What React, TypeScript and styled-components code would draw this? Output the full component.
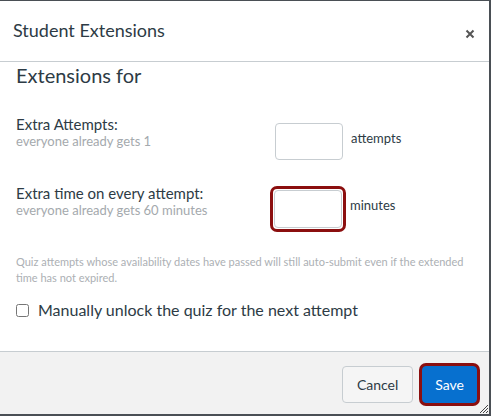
import React, { useState } from "react";
import styled, { createGlobalStyle } from "styled-components";

const GlobalStyle = createGlobalStyle`
  html, body {
    margin: 0;
    padding: 0;
    background: #ffffff;
  }
  body {
    font-family: Lato, "Liberation Sans", sans-serif;
    color: #2d3b45;
  }
`;

const Dialog = styled.div`
  width: 491px;
  height: 416px;
  box-sizing: border-box;
  border-top: 1px solid #4a4f55;
  border-right: 2px solid #4a4f55;
  border-bottom: 2px solid #4a4f55;
  display: flex;
  flex-direction: column;
  background: #fff;
  position: relative;
`;

const Header = styled.div`
  height: 60px;
  flex: none;
  display: flex;
  align-items: center;
  justify-content: space-between;
  padding: 0 14px 0 13px;
  border-bottom: 1px solid #c7cdd1;
`;

const Title = styled.h1`
  margin: 0 0 2px;
  font-size: 18px;
  font-weight: 400;
  color: #2d3b45;
`;

const Close = styled.button`
  border: none;
  background: none;
  padding: 0;
  margin-top: 5px;
  display: flex;
  cursor: pointer;
`;

const Body = styled.div`
  flex: 1;
  padding: 0 16px;
`;

const Heading = styled.h2`
  margin: 0;
  font-size: 20px;
  font-weight: 400;
  line-height: 26px;
  color: #2d3b45;
`;

const FieldRow = styled.div<{ $top: number }>`
  display: flex;
  align-items: flex-start;
  margin-top: ${(p) => p.$top}px;
`;

const LabelCol = styled.div`
  width: 259px;
  flex: none;
`;

const Label = styled.div`
  font-size: 15px;
  line-height: 18px;
`;

const Hint = styled.div`
  font-size: 13px;
  line-height: 16px;
  color: #a4a9ad;
`;

const InputWrap = styled.div<{ $focused?: boolean; $top: number }>`
  margin-top: ${(p) => p.$top}px;
  ${(p) =>
    p.$focused &&
    `
    margin-left: -5px;
    padding: 1px;
    border: 3px solid #8b0f0f;
    border-radius: 7px;
  `}
`;

const NumInput = styled.input<{ $h: number }>`
  display: block;
  width: 68px;
  height: ${(p) => p.$h}px;
  box-sizing: border-box;
  border: 1px solid #c7cdd1;
  border-radius: 4px;
  outline: none;
  font-family: inherit;
  font-size: 14px;
  padding: 0 6px;
`;

const Unit = styled.span<{ $top: number; $left: number }>`
  font-size: 13px;
  line-height: 16px;
  margin-left: ${(p) => p.$left}px;
  margin-top: ${(p) => p.$top}px;
  color: #2d3b45;
`;

const Note = styled.p`
  margin: 22px 0 0;
  font-size: 11px;
  line-height: 16px;
  color: #acb0b4;
`;

const CheckRow = styled.label`
  display: flex;
  align-items: center;
  margin-top: 14px;
  font-size: 16px;
  line-height: 20px;
  cursor: pointer;
`;

const Check = styled.input`
  width: 13px;
  height: 13px;
  margin: 0 9px 0 0;
`;

const Footer = styled.div`
  height: 63px;
  flex: none;
  box-sizing: border-box;
  background: #f2f2f2;
  border-top: 1px solid #c7cdd1;
  display: flex;
  align-items: center;
  justify-content: flex-end;
  gap: 9px;
  padding: 2px 12px 0 0;
`;

const Button = styled.button<{ $primary?: boolean }>`
  height: 37px;
  box-sizing: border-box;
  padding: 0 ${(p) => (p.$primary ? 12 : 14)}px;
  border-radius: 4px;
  font-family: inherit;
  font-size: 14px;
  cursor: pointer;
  color: ${(p) => (p.$primary ? "#fff" : "#2d3b45")};
  background: ${(p) => (p.$primary ? "#0770cf" : "#f5f5f5")};
  border: 1px solid ${(p) => (p.$primary ? "#0770cf" : "#c7cdd1")};
  box-shadow: ${(p) => (p.$primary ? "0 0 0 3px #8b0f0f" : "none")};
`;

const Grip = styled.svg`
  position: absolute;
  right: 1px;
  bottom: 1px;
`;

export default function App() {
  const [attempts, setAttempts] = useState("");
  const [minutes, setMinutes] = useState("");
  const [unlock, setUnlock] = useState(false);

  return (
    <>
      <GlobalStyle />
      <Dialog>
        <Header>
          <Title>Student Extensions</Title>
          <Close aria-label="Close">
            <svg width="10" height="10" viewBox="0 0 10 10">
              <path d="M1.5 1.5 L8.5 8.5 M8.5 1.5 L1.5 8.5" stroke="#555" strokeWidth="2" />
            </svg>
          </Close>
        </Header>
        <Body>
          <Heading>Extensions for</Heading>
          <FieldRow $top={27}>
            <LabelCol>
              <Label>Extra Attempts:</Label>
              <Hint>everyone already gets 1</Hint>
            </LabelCol>
            <InputWrap $top={8}>
              <NumInput $h={37} value={attempts} onChange={(e) => setAttempts(e.target.value)} />
            </InputWrap>
            <Unit $top={15} $left={8}>attempts</Unit>
          </FieldRow>
          <FieldRow $top={24}>
            <LabelCol>
              <Label>Extra time on every attempt:</Label>
              <Hint>everyone already gets 60 minutes</Hint>
            </LabelCol>
            <InputWrap $focused $top={2}>
              <NumInput $h={38} value={minutes} onChange={(e) => setMinutes(e.target.value)} />
            </InputWrap>
            <Unit $top={13} $left={4}>minutes</Unit>
          </FieldRow>
          <Note>
            Quiz attempts whose availability dates have passed will still auto-submit even if the extended
            time has not expired.
          </Note>
          <CheckRow>
            <Check type="checkbox" checked={unlock} onChange={(e) => setUnlock(e.target.checked)} />
            Manually unlock the quiz for the next attempt
          </CheckRow>
        </Body>
        <Footer>
          <Button>Cancel</Button>
          <Button $primary>Save</Button>
        </Footer>
        <Grip width="10" height="10" viewBox="0 0 10 10">
          <path d="M2 10 L10 2 M5 10 L10 5 M8 10 L10 8" stroke="#444" strokeWidth="1" />
        </Grip>
      </Dialog>
    </>
  );
}
